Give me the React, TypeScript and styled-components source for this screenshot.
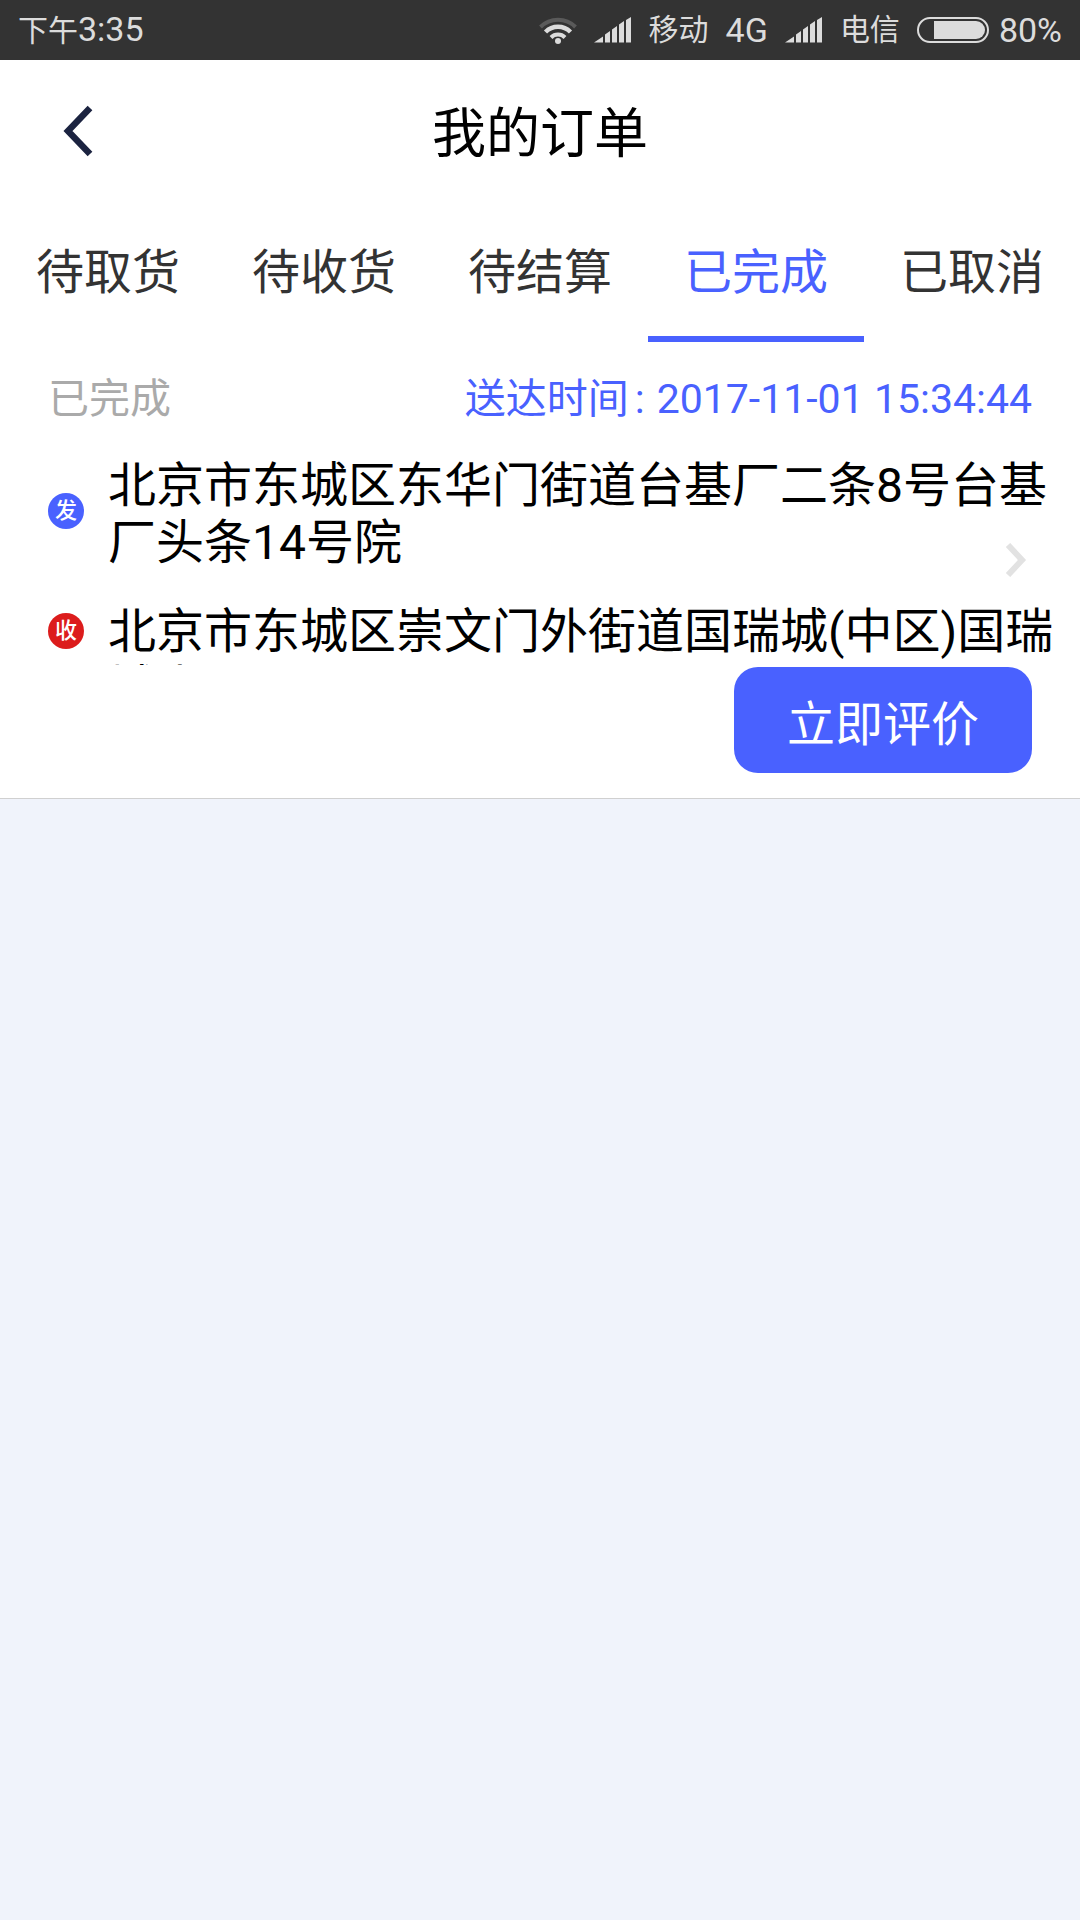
import React, { useState } from "react";
import styled, { createGlobalStyle } from "styled-components";

const GlobalStyle = createGlobalStyle`
  * { box-sizing: border-box; }
  body {
    margin: 0;
    background: #f0f3fb;
    font-family: Roboto, "Noto Sans CJK SC", sans-serif;
    color: #000;
  }
  button { font: inherit; border: 0; padding: 0; background: none; cursor: pointer; }
`;

const StatusBar = styled.div`
  display: flex;
  align-items: center;
  height: 60px;
  padding: 0 18px;
  background: #333;
  color: #dcdcdc;
  font-size: 30px;
  line-height: 60px;
`;

const Latin = styled.span`
  font-size: 34px;
`;

const StatusIcons = styled.div`
  display: flex;
  align-items: center;
  gap: 17px;
  margin-left: auto;
`;

const Battery = styled.span`
  display: flex;
  align-items: center;
  gap: 10px;
`;

const Header = styled.header`
  display: grid;
  grid-template-columns: 156px 1fr 156px;
  align-items: center;
  padding: 43px 0 27px;
  background: #fff;
`;

const BackButton = styled.button`
  display: flex;
  justify-content: center;
`;

const Title = styled.h1`
  margin: 0;
  font-size: 54px;
  line-height: 64px;
  font-weight: 400;
  text-align: center;
`;

const Tabs = styled.nav`
  display: flex;
  background: #fff;
`;

const Tab = styled.button<{ $active: boolean }>`
  flex: 1;
  padding: 16px 0 0;
  font-size: 48px;
  line-height: 126px;
  color: ${(p) => (p.$active ? "#4961ff" : "#333")};
  border-bottom: 6px solid ${(p) => (p.$active ? "#4961ff" : "transparent")};
`;

const Order = styled.article`
  padding: 24px 0;
  background: #fff;
  border-bottom: 1px solid #d0d0d0;
`;

const OrderHead = styled.div`
  display: flex;
  justify-content: space-between;
  padding: 0 48px;
  font-size: 41px;
  line-height: 66px;
`;

const State = styled.span`
  color: #aaa;
`;

const Delivered = styled.span`
  color: #4961ff;
`;

const Colon = styled.span`
  margin: 0 12px 0 6px;
`;

const Route = styled.div`
  position: relative;
  display: flex;
  flex-direction: column;
  gap: 32px;
  margin-top: 25px;
`;

const Stop = styled.div<{ $clipped: boolean }>`
  display: flex;
  align-items: center;
  gap: 24px;
  height: ${(p) => (p.$clipped ? "62px" : "auto")};
  padding: 0 24px 0 48px;
  overflow: hidden;
`;

const Mark = styled.span<{ $color: string }>`
  flex: none;
  width: 36px;
  height: 36px;
  margin-bottom: 6px;
  border-radius: 50%;
  background: ${(p) => p.$color};
  color: #fff;
  font-size: 22px;
  font-weight: 500;
  line-height: 36px;
  text-align: center;
`;

const Address = styled.p`
  align-self: flex-start;
  margin: 0;
  font-size: 48px;
  line-height: 57px;
`;

const More = styled.svg`
  position: absolute;
  right: 53px;
  top: 86px;
`;

const Actions = styled.div`
  display: flex;
  justify-content: flex-end;
  padding: 2px 48px 1px;
`;

const RateButton = styled.button`
  height: 106px;
  padding: 0 53px;
  border-radius: 24px;
  background: #4961ff;
  color: #fff;
  font-size: 48px;
`;

const Wifi = () => (
  <svg width="38" height="28" viewBox="0 0 38 28" fill="none" stroke="#dcdcdc" strokeWidth="4.5">
    <path d="M1.500 11a24.700 24.700 0 0 1 35 0" stroke="#5a5a5a" strokeWidth="4" />
    <path d="M6.500 16a17.700 17.700 0 0 1 25 0" />
    <path d="M12 21.500a9.900 9.900 0 0 1 14 0" strokeWidth="4" />
    <circle cx="19" cy="25" r="3" fill="#dcdcdc" stroke="none" />
  </svg>
);

const Signal = () => (
  <svg width="38" height="26" viewBox="0 0 38 26" fill="#dcdcdc">
    <path d="M0 25.500L9 19.500v6zM11 17.500l5-3.500v11.500h-5zM18 12.500l5-3.500v16.500h-5zM25 7.500l5-3.500v21.500h-5zM32 3l5-3v25.500h-5z" />
  </svg>
);

const BatteryIcon = () => (
  <svg width="72" height="26" viewBox="0 0 72 26">
    <rect x="1" y="1" width="70" height="24" rx="12" fill="none" stroke="#dcdcdc" strokeWidth="2" />
    <path d="M17 4h42a9 9 0 0 1 0 18H17z" fill="#dcdcdc" />
  </svg>
);

const tabs = ["待取货", "待收货", "待结算", "已完成", "已取消"];

const stops = [
  { mark: "发", color: "#4961ff", clipped: false, address: "北京市东城区东华门街道台基厂二条8号台基厂头条14号院" },
  { mark: "收", color: "#dc1c1c", clipped: true, address: "北京市东城区崇文门外街道国瑞城(中区)国瑞城中区" },
];

export default function App() {
  const [active, setActive] = useState("已完成");
  return (
    <>
      <GlobalStyle />
      <StatusBar>
        <span>下午<Latin>3:35</Latin></span>
        <StatusIcons>
          <Wifi />
          <Signal />
          <span>移动</span>
          <Latin>4G</Latin>
          <Signal />
          <span>电信</span>
          <Battery>
            <BatteryIcon />
            <Latin>80%</Latin>
          </Battery>
        </StatusIcons>
      </StatusBar>
      <Header>
        <BackButton aria-label="返回">
          <svg width="30" height="60" viewBox="0 0 30 60" fill="none" stroke="#1b2340" strokeWidth="6.5">
            <path d="M27 3L5 26l22 23" />
          </svg>
        </BackButton>
        <Title>我的订单</Title>
      </Header>
      <Tabs>
        {tabs.map((t) => (
          <Tab key={t} $active={t === active} onClick={() => setActive(t)}>
            {t}
          </Tab>
        ))}
      </Tabs>
      <Order>
        <OrderHead>
          <State>已完成</State>
          <Delivered>
            送达时间<Colon>:</Colon>
            <time dateTime="2017-11-01T15:34:44">2017-11-01 15:34:44</time>
          </Delivered>
        </OrderHead>
        <Route>
          {stops.map((s) => (
            <Stop key={s.mark} $clipped={s.clipped}>
              <Mark $color={s.color}>{s.mark}</Mark>
              <Address>{s.address}</Address>
            </Stop>
          ))}
          <More width="22" height="34" viewBox="0 0 22 34" fill="none" stroke="#e2e2e2" strokeWidth="6">
            <path d="M3 2l14 15L3 32" />
          </More>
        </Route>
        <Actions>
          <RateButton>立即评价</RateButton>
        </Actions>
      </Order>
    </>
  );
}
